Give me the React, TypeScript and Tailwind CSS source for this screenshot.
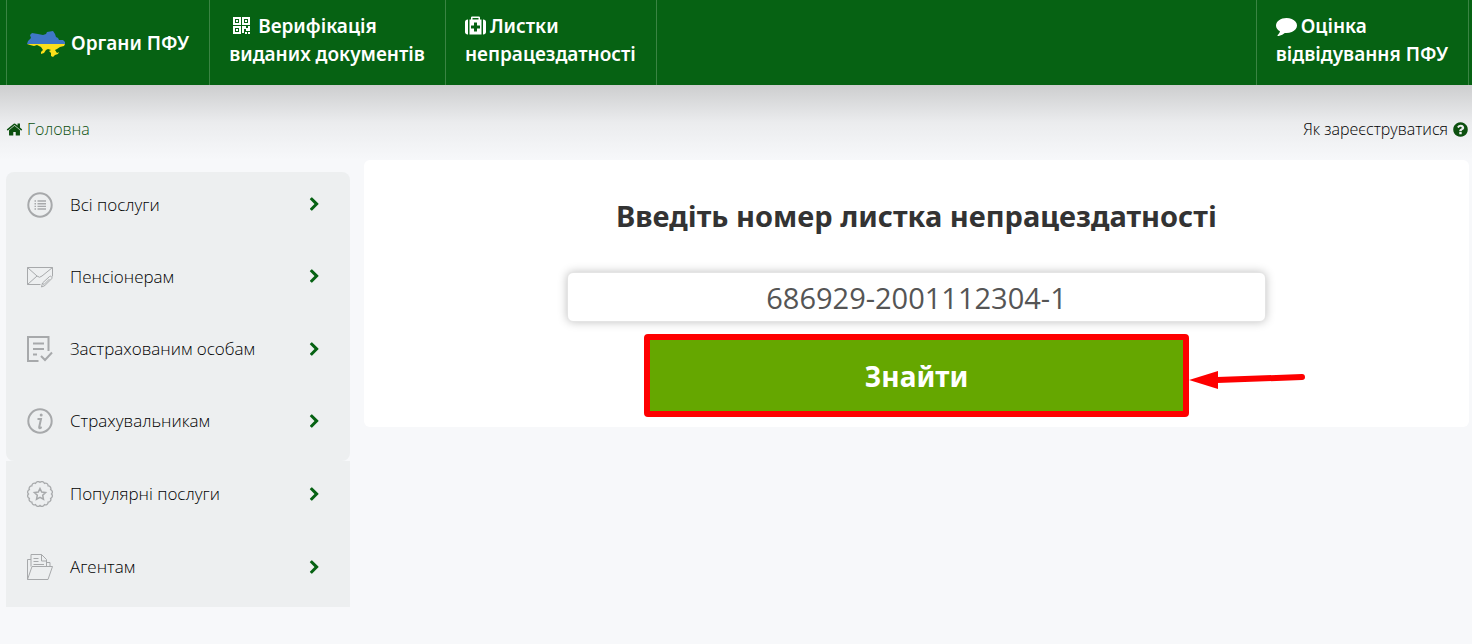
import type { ReactNode } from 'react'
import { useState } from 'react'

type IconProps = { className?: string }

const FA_HOME =
  'M1472 992v480q0 26-19 45t-45 19h-384v-384h-256v384h-384q-26 0-45-19t-19-45v-480q0-1 .5-3t.5-3l575-474 575 474q1 2 1 6zm223-69l-62 74q-8 9-21 11h-3q-13 0-21-7l-692-577-692 577q-12 8-24 7-13-2-21-11l-62-74q-8-10-7-23.5t11-21.5l719-599q32-26 76-26t76 26l244 204v-195q0-14 9-23t23-9h192q14 0 23 9t9 23v408l219 182q10 8 11 21.5t-7 23.5z'
const FA_CHEVRON =
  'M1363 877l-742 742q-19 19-45 19t-45-19l-166-166q-19-19-19-45t19-45l531-531-531-531q-19-19-19-45t19-45l166-166q19-19 45-19t45 19l742 742q19 19 19 45t-19 45z'
const FA_QUESTION =
  'M1024 1376v-192q0-14-9-23t-23-9h-192q-14 0-23 9t-9 23v192q0 14 9 23t23 9h192q14 0 23-9t9-23zm256-672q0-88-55.5-163t-138.5-116-170-41q-243 0-371 213-15 24 8 42l132 100q7 6 19 6 16 0 25-12 53-68 86-92 34-24 86-24 48 0 85.5 26t37.5 59q0 38-20 61t-68 45q-63 28-115.5 86.5t-52.5 125.5v36q0 14 9 23t23 9h192q14 0 23-9t9-23q0-19 21.5-49.5t54.5-49.5q32-18 49-28.5t46-35 44.5-48 28-60.5 12.5-81zm384 192q0 209-103 385.5t-279.5 279.5-385.5 103-385.5-103-279.5-279.5-103-385.5 103-385.5 279.5-279.5 385.5-103 385.5 103 279.5 279.5 103 385.5z'
const FA_MEDKIT =
  'M1280 1120v-192q0-14-9-23t-23-9h-224v-224q0-14-9-23t-23-9h-192q-14 0-23 9t-9 23v224h-224q-14 0-23 9t-9 23v192q0 14 9 23t23 9h224v224q0 14 9 23t23 9h192q14 0 23-9t9-23v-224h224q14 0 23-9t9-23zm-640-736h512v-128h-512v128zm-384 0v1280h-32q-92 0-158-66t-66-158v-832q0-92 66-158t158-66h32zm1152 0v1280h-1024v-1280h128v-160q0-40 28-68t68-28h576q40 0 68 28t28 68v160h128zm384 224v832q0 92-66 158t-158 66h-32v-1280h32q92 0 158 66t66 158z'
const FA_COMMENT =
  'M1792 896q0 174-120 321.5t-326 233-450 85.5q-70 0-145-8-198 175-460 242-49 14-114 22-17 2-30.5-9t-17.5-29v-1q-3-4-.5-12t2-10 4.5-9.5l6-9 7-8.5 8-9q7-8 31-34.5t34.5-38 31-39.5 32.5-51 27-59 26-76q-157-89-247.5-220t-90.5-281q0-130 71-248.5t191-204.5 286-136.5 348-50.5q244 0 450 85.5t326 233 120 321.5z'

function FaIcon({ d, className }: IconProps & { d: string }) {
  return (
    <svg viewBox="0 0 1792 1792" fill="currentColor" className={className} aria-hidden="true">
      <path d={d} />
    </svg>
  )
}

function QrIcon({ className }: IconProps) {
  return (
    <svg viewBox="0 0 17 17" fill="currentColor" className={className} aria-hidden="true">
      <path fillRule="evenodd" d="M0 0h8v8H0zM2 2v4h4V2zM9 0h8v8H9zM11 2v4h4V2zM0 9h8v8H0zM2 11v4h4v-4z" />
      <path d="M3 3h2v2H3zM12 3h2v2h-2zM3 12h2v2H3zM9 9h4v2h2V9h2v5h-4v-2h-2v4H9zM12 15h2v2h-2zM15 15h2v2h-2z" />
    </svg>
  )
}

function UkraineMap({ className }: IconProps) {
  return (
    <svg viewBox="0 0 38 27" className={className} aria-hidden="true">
      <path
        fill="#3f77c6"
        d="M0 13l1-3 3-3-1-3 2-2 6 1 5 1 3-1 1-2 6-1 2 3 1 3 2 1 1 2 4 0 2 2 0 2z"
      />
      <path
        fill="#fbdf1a"
        d="M0 13h38l-1 2-4 1-3 2-2 1 2 3 2-1-1 2-3 1-2 2-2-1 0-3-2-2 2-1-3-1-2 1-2 3-3 1 0-2 2-2-2-3-4-2-3 1-4-1z"
      />
    </svg>
  )
}

function Outline({ children, width = 1 }: { children: ReactNode; width?: number }) {
  return (
    <svg
      viewBox="0 0 26 26"
      fill="none"
      stroke="#a7a9ab"
      strokeWidth={width}
      className="size-[26px] shrink-0"
      aria-hidden="true"
    >
      {children}
    </svg>
  )
}

// wavy ring: a row of small arcs round the centre
function scallops(count: number, radius: number) {
  const point = (i: number) => {
    const a = (i / count) * Math.PI * 2
    return `${(13 + radius * Math.sin(a)).toFixed(2)} ${(13 - radius * Math.cos(a)).toFixed(2)}`
  }
  let d = `M${point(0)}`
  for (let i = 1; i <= count; i++) d += `A2.6 2.6 0 0 1 ${point(i)}`
  return d
}

const icons = {
  list: (
    <Outline width={2}>
      <circle cx="13" cy="13" r="11.7" />
      <path d="M10.5 9h8.5M10.5 11.7h8.5M10.5 14.4h8.5M10.5 17h8.5" strokeWidth="1.4" />
      <path d="M7.5 9h1.5M7.5 11.7h1.5M7.5 14.4h1.5M7.5 17h1.5" strokeWidth="1.4" />
    </Outline>
  ),
  mail: (
    <Outline>
      <path d="M13.5 20.5H.5v-17h25v9M.5 3.5L10 12q2.5 2.5 5 0l10.500-8.500M.5 20.500l9.500-8.500" />
      <path d="M14.5 23l1-4 7-6.500q1-.8 2 .2t.2 2l-7 7zM15.500 19l2.200 2.500M17.500 20l5-5" />
    </Outline>
  ),
  form: (
    <Outline width={2}>
      <path d="M11.5 25H1V1h20.500v14" />
      <path d="M6 7.5h11M6 13h11M6 18.500h4M14 20l4 4 7-7.500" />
    </Outline>
  ),
  info: (
    <Outline width={2}>
      <circle cx="13" cy="13" r="11.7" />
      <path d="M10.5 11h3.500l-1.800 8q-.3 1.500 1 1l1.500-.8" />
      <circle cx="14.2" cy="7" r="1.5" fill="#a7a9ab" stroke="none" />
    </Outline>
  ),
  badge: (
    <Outline width={1.3}>
      <path d={scallops(16, 11.5)} />
      <path d="M13 7.5l1.700 3.600 3.900.5-2.900 2.700.8 3.900-3.500-1.900-3.500 1.900.8-3.900-2.900-2.700 3.900-.5z" strokeWidth="1.5" />
    </Outline>
  ),
  folder: (
    <Outline>
      <path d="M.5 25.500V5.500H4M.5 25.500L5 12.500h20.500l-4.500 13zM4 12.500V.5h10.500l5 5v7M14.500.5v6.500h5M19.500 8.500h3.500v4" />
      <path d="M6.5 4.500h5M6.500 7.500h5M6.500 10.500h10.500" />
    </Outline>
  ),
}

type MenuItem = { label: string; icon: keyof typeof icons }

const serviceItems: MenuItem[] = [
  { label: 'Всі послуги', icon: 'list' },
  { label: 'Пенсіонерам', icon: 'mail' },
  { label: 'Застрахованим особам', icon: 'form' },
  { label: 'Страхувальникам', icon: 'info' },
]

const otherItems: MenuItem[] = [
  { label: 'Популярні послуги', icon: 'badge' },
  { label: 'Агентам', icon: 'folder' },
]

function MenuRow({ label, icon }: MenuItem) {
  return (
    <a href="#" className="flex items-center pt-1 pr-7 pb-[11px] pl-[21px] hover:bg-[#e4e7e8]">
      {icons[icon]}
      <span className="ml-[17px] flex-1 text-[17px] leading-6 font-light">{label}</span>
      <FaIcon d={FA_CHEVRON} className="size-[15px] text-[#066213]" />
    </a>
  )
}

export default function App() {
  const [number, setNumber] = useState('686929-2001112304-1')

  return (
    <div className="min-h-screen bg-[#f7f8fa] font-['Open_Sans','Noto_Sans',sans-serif] text-black">
      <header className="bg-[#066213] pr-[3px] pl-[6px] font-['Noto_Sans',sans-serif] text-[19px] leading-7 font-semibold text-white">
        <nav className="flex h-[85px] border-x border-[#3a8443]">
          <a href="#" className="flex items-center gap-[6px] border-r border-[#3a8443] px-5">
            <UkraineMap className="mt-1 h-[27px] w-[38px]" />
            <span>Органи ПФУ</span>
          </a>
          <a href="#" className="border-r border-[#3a8443] pt-3 pr-5 pl-[19px]">
            <QrIcon className="mr-2 mb-1 ml-1 inline size-[17px]" />
            Верифікація
            <br />
            виданих документів
          </a>
          <a href="#" className="border-r border-[#3a8443] pt-3 pr-5 pl-[19px]">
            <FaIcon d={FA_MEDKIT} className="mr-1 mb-1 inline size-[21px]" />
            Листки
            <br />
            непрацездатності
          </a>
          <a href="#" className="ml-auto border-l border-[#3a8443] pt-3 pr-5 pl-[19px]">
            <FaIcon d={FA_COMMENT} className="mr-1 mb-1 inline size-[21px]" />
            Оцінка
            <br />
            відвідування ПФУ
          </a>
        </nav>
      </header>

      <div className="flex h-[75px] items-center justify-between bg-linear-to-b from-[#cdcecf] via-[#ebecee] to-[#f7f8fa] pt-[13px] pr-[3px] pl-[6px] text-[16px] leading-6 font-light">
        <a href="#" className="flex items-center gap-1 text-[#0c500f]">
          <FaIcon d={FA_HOME} className="size-[17px]" />
          Головна
        </a>
        <a href="#" className="flex items-center gap-1">
          Як зареєструватися
          <FaIcon d={FA_QUESTION} className="size-[17px] text-[#0c500f]" />
        </a>
      </div>

      <div className="flex items-start gap-[14px] pr-[3px] pb-9 pl-[6px]">
        <aside className="mt-3 w-[344px] shrink-0">
          <nav className="grid h-[289px] grid-rows-4 overflow-hidden rounded-lg bg-[#edeff0]">
            {serviceItems.map((item) => (
              <MenuRow key={item.label} {...item} />
            ))}
          </nav>
          <nav className="grid h-[146px] grid-rows-2 bg-[#edeff0]">
            {otherItems.map((item) => (
              <MenuRow key={item.label} {...item} />
            ))}
          </nav>
        </aside>

        <main className="flex-1 rounded-md bg-white px-5 pt-9 pb-[10px]">
          <form className="flex flex-col items-center" onSubmit={(e) => e.preventDefault()}>
            <label
              htmlFor="sheet-number"
              className="text-center font-['Noto_Sans',sans-serif] text-[29px] leading-10 font-bold text-[#333]"
            >
              Введіть номер листка непрацездатності
            </label>
            <input
              id="sheet-number"
              value={number}
              onChange={(e) => setNumber(e.target.value)}
              className="mt-9 h-[50px] w-full max-w-[699px] rounded-md border border-[#e4e4e4] bg-white text-center text-[29px] font-normal text-[#555] shadow-[0_0_10px_rgba(0,0,0,0.25)] outline-none"
            />
            <div className="relative mt-3 w-full max-w-[545px]">
              <button
                type="submit"
                className="h-[83px] w-full rounded border-6 border-[#fe0000] bg-[#65a700] font-['Noto_Sans',sans-serif] text-[28px] font-bold text-white"
              >
                Знайти
              </button>
              <svg viewBox="0 0 116 20" className="absolute top-9 left-full h-5 w-[116px]" aria-hidden="true">
                <path d="M28 10L113 7" stroke="#fe0000" strokeWidth="6" strokeLinecap="round" />
                <path d="M0 10L29 1v18z" fill="#fe0000" />
              </svg>
            </div>
          </form>
        </main>
      </div>
    </div>
  )
}
